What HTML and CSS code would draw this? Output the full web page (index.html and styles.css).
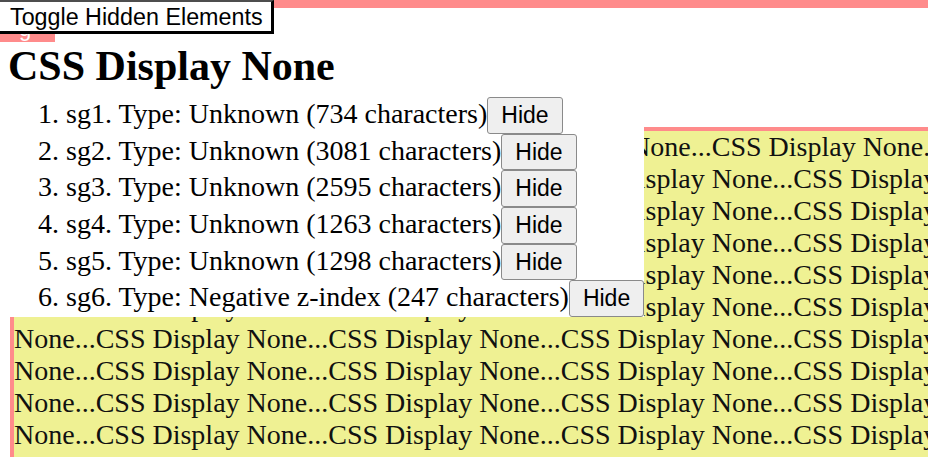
FILE: index.html
```html
<!DOCTYPE html>
<html lang="en">
<head>
<meta charset="utf-8">
<title>CSS Display None</title>
<link rel="stylesheet" href="styles.css">
</head>
<body>
<div class="top-bar"></div>
<div class="tab">g</div>
<button class="toggle">Toggle Hidden Elements</button>

<h1 class="title">CSS Display None</h1>
<ol class="list">
  <li>sg1. Type: Unknown (734 characters)<button class="hide">Hide</button></li>
  <li>sg2. Type: Unknown (3081 characters)<button class="hide">Hide</button></li>
  <li>sg3. Type: Unknown (2595 characters)<button class="hide">Hide</button></li>
  <li>sg4. Type: Unknown (1263 characters)<button class="hide">Hide</button></li>
  <li>sg5. Type: Unknown (1298 characters)<button class="hide">Hide</button></li>
  <li>sg6. Type: Negative z-index (247 characters)<button class="hide">Hide</button></li>
</ol>

<div class="hidden-block">CSS Display None...CSS Display None...CSS Display None...CSS Display None...CSS Display None...CSS Display None...CSS Display None...CSS Display None...CSS Display None...CSS Display None...CSS Display None...CSS Display None...CSS Display None...CSS Display None...CSS Display None...CSS Display None...CSS Display None...CSS Display None...CSS Display None...CSS Display None...CSS Display None...CSS Display None...CSS Display None...CSS Display None...CSS Display None...CSS Display None...CSS Display None...CSS Display None...CSS Display None...CSS Display None...CSS Display None...CSS Display None...CSS Display None...CSS Display None...CSS Display None...CSS Display None...CSS Display None...CSS Display None...CSS Display None...CSS Display None...CSS Display None...CSS Display None...CSS Display None...CSS Display None...CSS Display None...CSS Display None...CSS Display None...CSS Display None...CSS Display None...CSS Display None...CSS Display None...CSS Display None...CSS Display None...CSS Display None...CSS Display None...CSS Display None...CSS Display None...CSS Display None...CSS Display None...CSS Display None...</div>
</body>
</html>
```

FILE: styles.css
```css
html {
  overflow: hidden;
  background: #fff;
}

body {
  margin: 8px;
  font-family: "Liberation Serif", "Times New Roman", serif;
  font-size: 28px;
  color: #000;
}

.top-bar {
  position: absolute;
  top: 0;
  left: 0;
  right: 0;
  height: 8px;
  background: #ff8b8b;
}

.tab {
  position: absolute;
  top: 0;
  left: 0;
  width: 55px;
  height: 42px;
  background: #ff8b8b;
  color: #fff;
  font-family: "Liberation Sans", Arial, sans-serif;
  font-size: 22px;
  line-height: 1;
  padding-left: 19px;
  padding-top: 18px;
  box-sizing: border-box;
  overflow: hidden;
}

.toggle {
  position: fixed;
  top: 0;
  left: 0;
  z-index: 10;
  width: 274px;
  height: 34px;
  box-sizing: border-box;
  margin: 0;
  padding: 2px 0 0 10px;
  text-align: left;
  background: #fff;
  color: #000;
  border: 0;
  border-top: 2px solid #4e4e4e;
  border-right: 3px solid #000;
  border-bottom: 3px solid #000;
  font-family: "Liberation Sans", Arial, sans-serif;
  font-size: 23.3px;
  line-height: 27px;
}

.title {
  margin: 34px 0 7px;
  font-size: 42px;
  line-height: 48px;
  font-weight: bold;
}

.list {
  margin: 0;
  padding: 0 0 0 58px;
  width: fit-content;
  background: #fff;
}

.list li {
  white-space: nowrap;
}

.hide {
  margin: 0;
  padding: 4px 13px 3.7px;
  font-family: "Liberation Sans", Arial, sans-serif;
  font-size: 23px;
  line-height: normal;
  color: #000;
  background: #efefef;
  border: 1px solid #8a8a8a;
  border-radius: 3px;
}

.hidden-block {
  position: absolute;
  z-index: -1;
  top: 127px;
  left: 10px;
  width: 1180px;
  height: 400px;
  border-top: 4px solid #ff8b8b;
  border-left: 4px solid #ff8b8b;
  background: #eff193;
  color: #111;
  font-size: 28px;
  line-height: 32px;
}
```
